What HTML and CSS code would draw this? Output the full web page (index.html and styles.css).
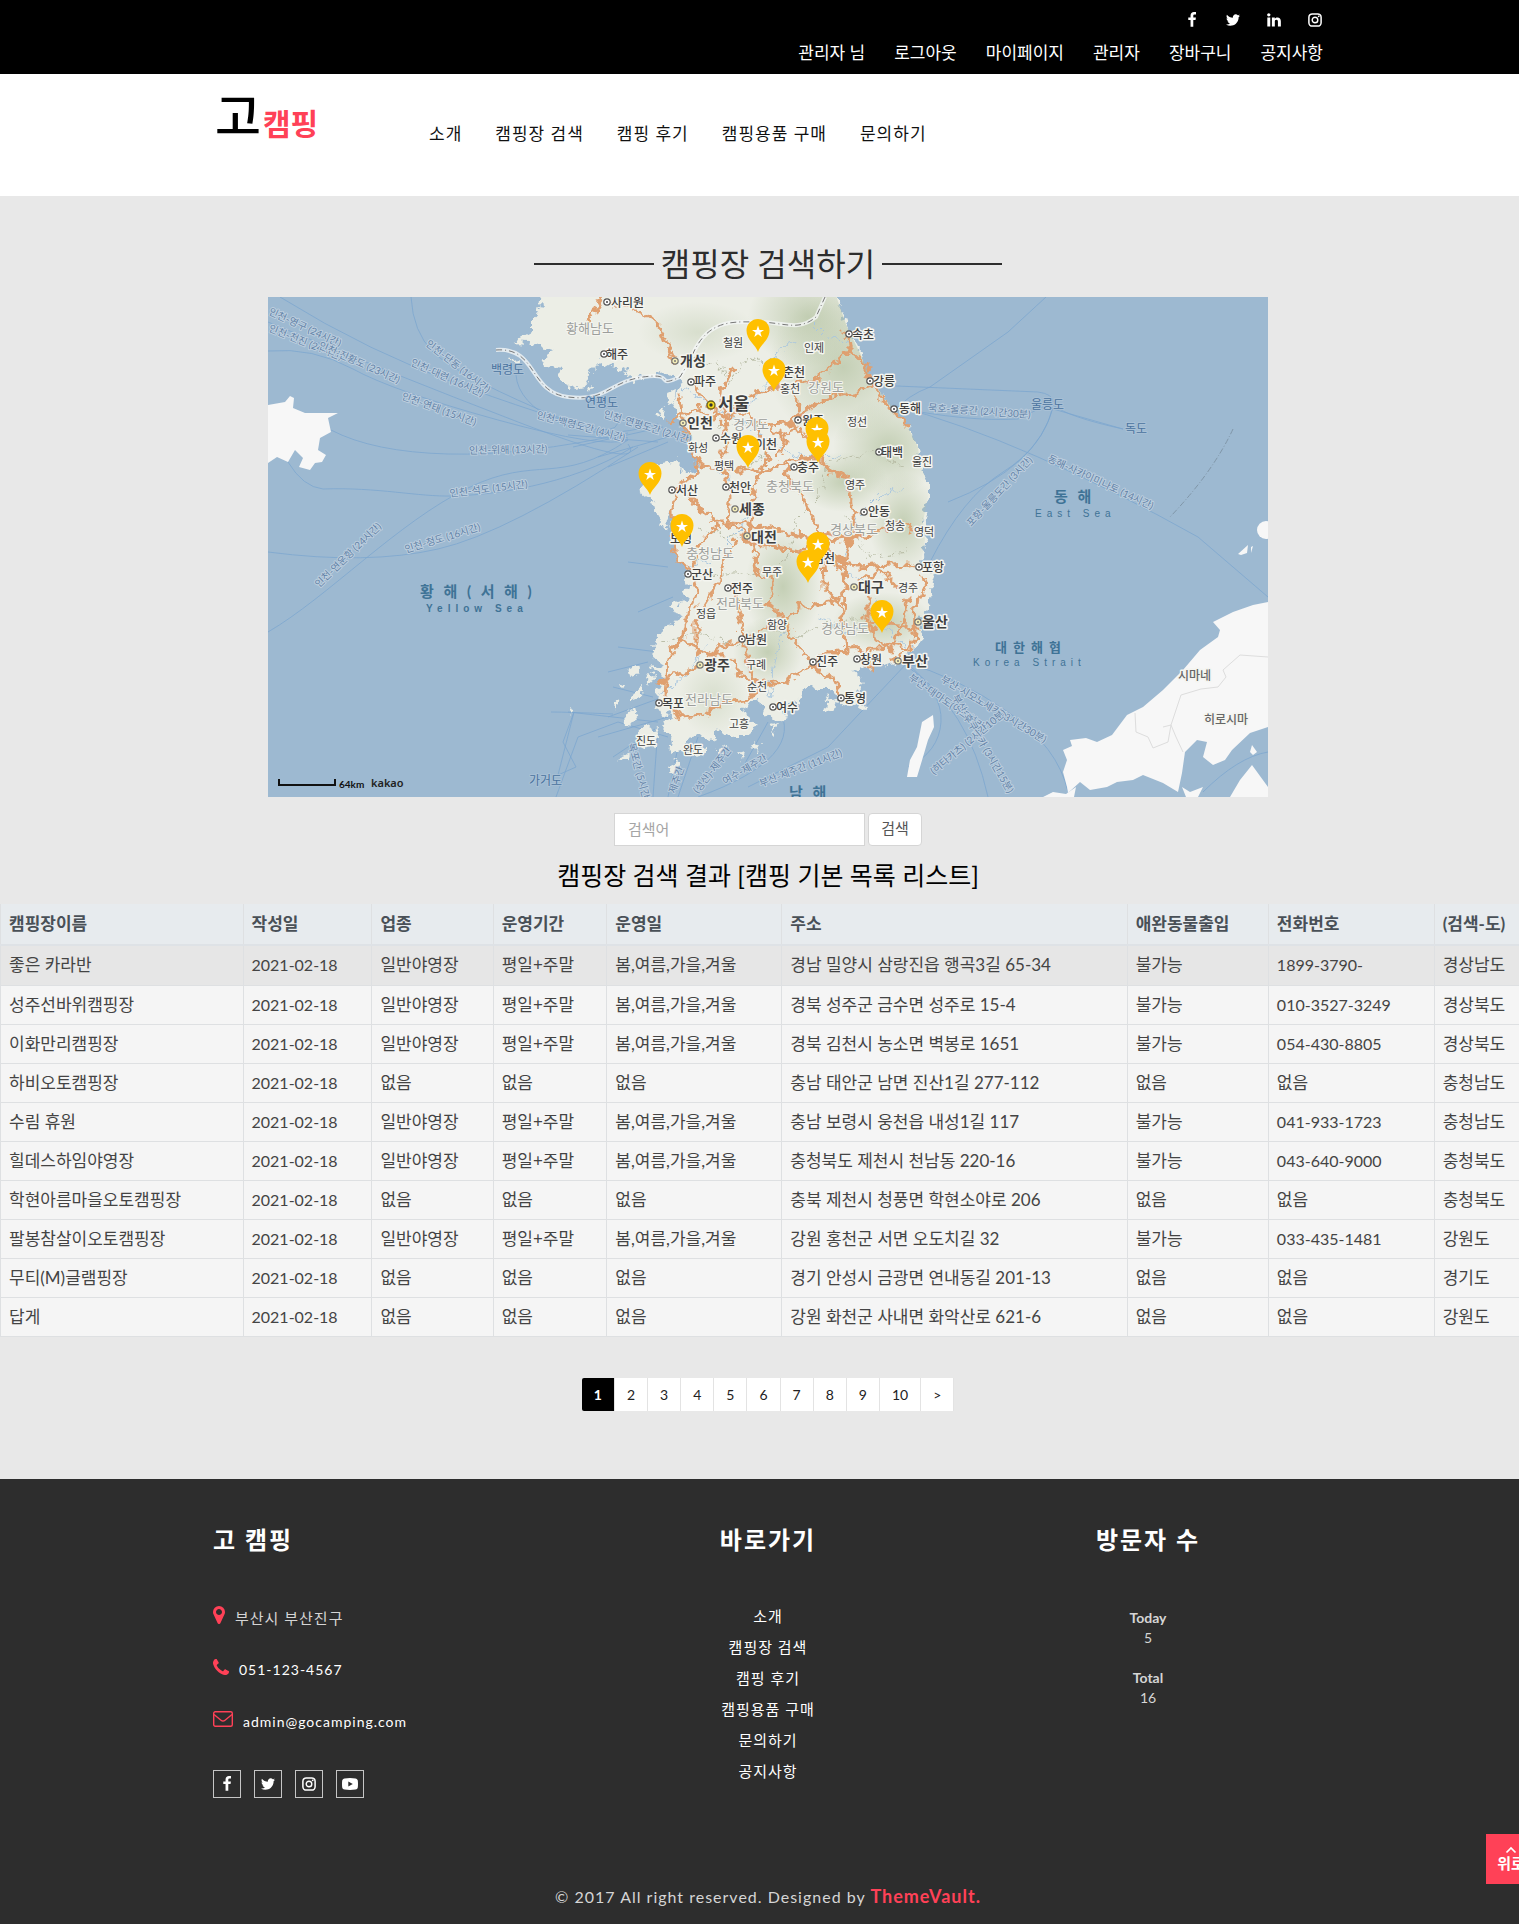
FILE: index.html
```html
<!DOCTYPE html>
<html lang="ko">
<head>
<meta charset="utf-8">
<meta name="viewport" content="width=device-width, initial-scale=1">
<title>고캠핑 - 캠핑장 검색</title>
<link rel="stylesheet" href="styles.css">
</head>
<body>
<svg class="defs" aria-hidden="true">
  <symbol id="i-facebook" viewBox="0 0 1792 1792"><path d="M1343 12v264h-157q-86 0-116 36t-30 108v189h293l-39 296h-254v759h-306v-759h-255v-296h255v-218q0-186 104-288.5t277-102.5q147 0 228 12z"/></symbol>
  <symbol id="i-twitter" viewBox="0 0 1792 1792"><path d="M1684 408q-67 98-162 167 1 14 1 42 0 130-38 259.500t-115.500 248.500-184.500 210.500-258 146-323 54.500q-271 0-496-145 35 4 78 4 225 0 401-138-105-2-188-64.500t-114-159.500q33 5 61 5 43 0 85-11-112-23-185.500-111.500t-73.500-205.500v-4q68 38 146 41-66-44-105-115t-39-154q0-88 44-163 121 149 294.500 238.500t371.500 99.500q-8-38-8-74 0-134 94.500-228.500t228.500-94.500q140 0 236 102 109-21 205-78-37 115-142 178 93-10 186-50z"/></symbol>
  <symbol id="i-linkedin" viewBox="0 0 1792 1792"><path d="M477 625v991h-330v-991h330zm21-306q1 73-50.500 122t-135.500 49h-2q-82 0-132-49t-50-122q0-74 51.500-122.500t134.500-48.500 133 48.500 51 122.500zm1166 729v568h-329v-530q0-105-40.500-164.500t-126.500-59.500q-63 0-105.500 34.500t-63.500 85.500q-11 30-11 81v553h-329q2-399 2-647t-1-296l-1-48h329v144h-2q20-32 41-56t56.500-52 87-43.500 114.500-15.500q171 0 275 113.500t104 332.500z"/></symbol>
  <symbol id="i-instagram" viewBox="0 0 16 16"><rect x="1.900" y="1.900" width="12.200" height="12.200" rx="3.400" fill="none" stroke="currentColor" stroke-width="1.500"/><circle cx="8" cy="8" r="2.800" fill="none" stroke="currentColor" stroke-width="1.400"/><circle cx="11.700" cy="4.300" r=".9"/></symbol>
  <symbol id="i-youtube" viewBox="0 0 16 16"><path fill-rule="evenodd" d="M2.500 2.400Q8 1.700 13.500 2.400 15.500 2.700 15.800 4.600 16.200 8 15.800 11.400 15.500 13.300 13.500 13.600 8 14.300 2.500 13.600.500 13.300.2 11.400-.2 8 .2 4.600.500 2.700 2.500 2.400ZM6.300 5.500V10.500L10.800 8Z"/></symbol>
  <symbol id="i-marker" viewBox="384 128 1024 1536"><path d="M1152 640q0-106-75-181t-181-75-181 75-75 181 75 181 181 75 181-75 75-181zm256 0q0 109-33 179l-364 774q-16 33-47.500 52t-67.500 19-67.500-19-46.500-52l-365-774q-33-70-33-179 0-212 150-362t362-150 362 150 150 362z"/></symbol>
  <symbol id="i-phone" viewBox="192 128 1408 1408"><path d="M1600 1240q0 27-10 70.500t-21 68.500q-21 50-122 106-94 51-186 51-27 0-52.500-3.500t-57.500-12.500-47.500-14.500-55.500-20.500-49-18q-98-35-175-83-128-79-264.500-215.500t-215.500-264.500q-48-77-83-175-3-9-18-49t-20.500-55.500-14.500-47.500-12.500-57.500-3.500-52.500q0-92 51-186 56-101 106-122 25-11 68.500-21t70.500-10q14 0 21 3 18 6 53 76 11 19 30 54t35 63.500 31 53.500q3 4 17.500 25t21.500 35.500 7 28.500q0 20-28.500 50t-62 55-62 53-28.500 46q0 9 5 22.500t8.500 20.500 14 24 11.500 19q76 137 174 235t235 174q2 1 19 11.500t24 14 20.500 8.500 22.500 5q18 0 46-28.500t53-62 55-62 50-28.500q14 0 28.500 7t35.500 21.500 25 17.500q25 15 53.500 31t63.500 35 54 30q70 35 76 53 3 7 3 21z"/></symbol>
  <symbol id="i-mail" viewBox="0 0 20 16"><rect x=".7" y=".7" width="18.600" height="14.600" rx="1.500" fill="none" stroke="currentColor" stroke-width="1.400"/><path d="M1 3.500 8 9.200Q10 10.800 12 9.200L19 3.500" fill="none" stroke="currentColor" stroke-width="1.400"/></symbol>
  <symbol id="i-up" viewBox="0 0 12 8"><path d="M1.500 6.500 6 2l4.500 4.500" fill="none" stroke="currentColor" stroke-width="1.700"/></symbol>
</svg>

<div class="page">
  <div class="topbar">
    <div class="container">
      <div class="top-social">
        <a href="#" aria-label="Facebook"><svg><use href="#i-facebook"/></svg></a>
        <a href="#" aria-label="Twitter"><svg><use href="#i-twitter"/></svg></a>
        <a href="#" aria-label="LinkedIn"><svg><use href="#i-linkedin"/></svg></a>
        <a href="#" aria-label="Instagram"><svg><use href="#i-instagram"/></svg></a>
      </div>
      <nav class="top-links">
        <a href="#">관리자 님</a><a href="#">로그아웃</a><a href="#">마이페이지</a><a href="#">관리자</a><a href="#">장바구니</a><a href="#">공지사항</a>
      </nav>
    </div>
  </div>

  <header class="header">
    <div class="container header-row">
      <a class="logo" href="#"><span class="logo-go">고</span><span class="logo-camp">캠핑</span></a>
      <nav class="main-nav">
        <a href="#">소개</a><a href="#">캠핑장 검색</a><a href="#">캠핑 후기</a><a href="#">캠핑용품 구매</a><a href="#">문의하기</a>
      </nav>
    </div>
  </header>

  <main>
    <h1 class="title">캠핑장 검색하기</h1>
    <div class="map">
      <svg viewBox="0 0 1000 500" role="img" aria-label="캠핑장 지도">
        <defs>
          <radialGradient id="hill"><stop offset="0" stop-color="#b3c2a0" stop-opacity=".7"/><stop offset="1" stop-color="#b3c2a0" stop-opacity="0"/></radialGradient>
          <filter id="coast" x="-5%" y="-5%" width="110%" height="110%" color-interpolation-filters="sRGB"><feTurbulence type="fractalNoise" baseFrequency=".11" numOctaves="3" seed="4" result="n"/><feDisplacementMap in="SourceGraphic" in2="n" scale="14" xChannelSelector="R" yChannelSelector="G"/></filter>
          <clipPath id="land"><use href="#korea-shape"/></clipPath>
          <g id="pin"><path d="M0 0C-2-7-11.500-12-11.500-21.500A11.500 11.500 0 0 1 11.500-21.500C11.500-12 2-7 0 0Z" fill="#ffc000"/><path d="M0-26.500 1.500-22.100H6L2.400-19.400 3.700-15 0-17.700-3.700-15-2.400-19.400-6-22.100H-1.500Z" fill="#fff"/></g>
          <g id="dot"><circle r="3.200" fill="#fff" stroke="#555" stroke-width="1.200"/><circle r="1" fill="#444"/></g>
          <g id="metro"><circle r="3.200" fill="#f6efb8" stroke="#777" stroke-width="1.200"/><circle r="1" fill="#777"/></g>
          <path id="korea-shape" d="M275 -10 272 13 264 23 264 35 246 45 259 46 270 48 289 51 275 61 279 68 289 70 295 71 290 80 296 82 302 93 315 90 322 76 332 66 342 70 352 71 362 76 365 83 382 78 399 75 412 81 416 90 408 97 405 110 409 121 417 133 424 146 429 163 432 173 419 176 409 163 392 166 382 180 372 193 382 201 387 210 392 226 397 233 399 223 404 210 406 226 408 240 405 249 410 263 419 273 414 281 425 288 414 295 422 303 400 311 414 320 395 331 387 346 385 360 395 368 382 371 397 380 390 393 387 410 402 420 395 430 404 443 402 458 415 453 419 443 432 440 444 443 449 433 465 440 482 440 489 428 479 420 475 410 492 401 497 416 505 423 519 420 515 406 529 403 542 386 549 393 565 393 572 406 585 410 590 393 599 385 585 376 602 370 615 371 629 368 637 363 645 353 654 340 652 323 662 310 665 286 667 276 655 273 654 260 657 243 655 225 660 200 660 186 652 166 650 150 640 130 625 110 605 86 592 56 579 30 565 -10Z"/>
        </defs>
        <rect width="1000" height="500" fill="#9db9d1"/>
        <g class="ferry">
          <path d="M12 0Q100 55 200 91T360 141"/><path d="M143 0Q145 35 165 55T270 112 350 120"/><path d="M0 54Q45 50 85 72T230 123 360 143"/><path d="M0 25Q120 75 250 125T360 147"/><path d="M63 133Q105 155 180 157T360 136"/><path d="M20 165Q35 190 55 192C110 190 150 200 185 199S300 190 365 150"/><path d="M0 335C60 300 130 225 200 191S290 190 360 143"/><path d="M0 255Q100 268 170 252T370 150"/><path d="M248 78Q250 105 290 125T390 127"/><path d="M300 138 390 145M305 150 395 130M330 160 400 140M340 170 400 145"/>
          <path d="M625 115Q640 98 662 90L740 35 778 0"/><path d="M605 88 770 95Q785 97 785 105L750 122Q700 125 625 110M785 108Q800 120 855 132M785 112 855 132M785 110Q775 150 735 175T662 265M785 110Q770 170 680 205M625 108Q690 125 770 160T930 240L1000 300"/>
          <path d="M635 365Q690 380 740 415T800 495M640 370Q700 410 720 500M637 365Q675 395 673 425T640 470M640 365 560 450 480 490M510 410Q540 460 430 500M400 440 350 425 310 440 288 500M390 430 385 500M410 450 400 500M430 440 410 500M395 400 340 420M300 415 390 425M283 415Q300 415 345 417M306 415 295 445 308 470 290 478ZM360 265 400 270M370 315 405 300M350 350 390 355M340 375 380 365M345 390 385 400M330 440 400 420M345 460 390 430M1000 455Q970 460 935 495M500 425 475 470"/>
        </g>
        <path class="shore" d="M0 108 17 105 22 99 26 101 25 111 37 116 55 116 70 116 60 121 63 135 52 141 50 153 58 158 54 165 47 166 42 173 31 170 35 161 27 153 20 165 9 160 0 166Z"/>
        <path class="shore" d="M1000 305 985 308 965 315 945 325 952 333 950 340 932 353 915 373 895 393 875 410 859 418 844 438 829 445 818 441 802 443 804 449 795 453 799 463 795 475 799 490 800 496 812 485 822 493 839 490 849 485 865 483 875 478 895 486 910 495 914 476 917 455 929 443 939 445 935 460 945 468 957 463 964 453 982 436 1000 430Z"/>
        <path class="shore" d="M962 500 972 483 984 468 1000 490V500ZM775 500 785 495 798 497 808 490 806 500ZM914 490 922 495 935 490 930 500 918 500ZM984 448 989 455 985 458 982 455ZM665 418 654 425 649 450 642 463 639 480 649 480 655 460 660 443 666 430Z"/>
        <circle class="shore" cx="998" cy="233" r="9"/><path class="shore" d="M970 257 980 248 979 256 973 258ZM983 250 985 249 983 256ZM976 260 980 261"/>
        <path class="border" d="M867 416 868 435 880 440 885 451 900 445 903 428 895 430M903 428 908 440 915 455M903 428 913 398 933 392 950 390 958 380 955 373 972 358 1000 360"/>
        <g filter="url(#coast)">
          <use href="#korea-shape" fill="#eceee6"/>
          <path fill="#eceee6" d="M366 392 376 387 374 400 364 404ZM360 372 368 368 372 378 362 380ZM378 376 386 378 382 386ZM357 418 365 412 368 424 358 428ZM370 435 385 428 392 442 378 452 368 446ZM400 468 410 462 412 474 404 476ZM350 460 360 456 358 464ZM425 452 440 450 438 460ZM448 452 460 448 460 456 450 460ZM500 428 512 426 506 434ZM508 390 524 388 515 404 506 402ZM558 404 568 400 566 414 557 412ZM590 406 598 408 594 416ZM388 118 398 112 396 124ZM398 98 408 94 406 104 400 106ZM320 88 325 87 324 95ZM300 410 306 413 303 418ZM243 62 251 61 247 67ZM345 405 352 402 350 410ZM352 385 358 388 354 393ZM485 450 492 447 490 455ZM470 458 476 456 474 463Z"/>
        </g>
        <g clip-path="url(#land)">
          <ellipse cx="575" cy="70" rx="75" ry="75" fill="url(#hill)"/><ellipse cx="540" cy="20" rx="60" ry="50" fill="url(#hill)"/><ellipse cx="620" cy="150" rx="55" ry="50" fill="url(#hill)"/><ellipse cx="575" cy="185" rx="45" ry="30" fill="url(#hill)"/><ellipse cx="515" cy="290" rx="38" ry="60" fill="url(#hill)"/><ellipse cx="500" cy="355" rx="35" ry="35" fill="url(#hill)"/><ellipse cx="635" cy="225" rx="35" ry="50" fill="url(#hill)"/><ellipse cx="615" cy="325" rx="50" ry="30" fill="url(#hill)"/><ellipse cx="430" cy="35" rx="60" ry="30" fill="url(#hill)" opacity=".5"/><ellipse cx="445" cy="400" rx="35" ry="40" fill="url(#hill)" opacity=".5"/>
        </g>
        <g filter="url(#coast)">
          <path class="river" d="M415 90 440 108 460 118 480 110 500 85 510 55 530 45M460 118 490 135 530 160 570 158M420 270 445 260 470 235 490 200M640 350 615 330 605 290 570 270 590 220 610 200 635 190M390 400 420 375 440 345M500 400 510 350 520 330M425 165 450 175 465 185M545 25 560 40 580 45M550 320 580 335 600 330"/>
          <path class="admin" d="M425 60 455 70 460 90 480 60 510 70M450 130 490 125 495 160 470 175M560 165 600 155 640 170M560 170 550 200 530 220 520 260 500 285M430 230 460 240 500 235M415 275 450 280 490 275M395 345 430 335 470 350 500 345M495 330 530 340 550 330 600 320M580 220 600 260 640 255"/>
        </g>
        <path class="halo" d="M228 53C270 50 260 95 300 100S340 85 375 80 385 92 412 80L418 70M420 70C435 20 465 25 490 25S530 35 548 20L557 0"/><path class="dash" d="M228 53C270 50 260 95 300 100S340 85 375 80 385 92 412 80L418 70M420 70C435 20 465 25 490 25S530 35 548 20L557 0"/>
        <g class="road" filter="url(#coast)">
          <path d="M334 0 321 23"/><path d="M345 6 372 13 393 30 400 50 407 66"/><path d="M425 80 430 95 445 110 455 120 457 150 452 165 458 182 462 200 458 225 475 235 480 245"/>
          <path d="M464 72 455 88 453 105 458 118 445 120 430 112 413 118 402 125"/><path d="M412 98 414 120 422 150 432 165 440 172 460 173 485 173 500 175 512 165 550 162 565 176 580 182 582 205 588 215 584 240 580 250"/>
          <path d="M458 118 470 105 490 95 520 88 550 82 565 68 582 53 581 38 575 35M582 53 598 68 602 85"/>
          <path d="M455 120 480 115 495 128 520 127 545 108 570 98 597 94 602 85 622 110 638 128"/><path d="M522 88 530 105 528 122 515 142 510 160M500 128 520 146"/><path d="M522 127 545 145 558 168 565 178"/>
          <path d="M405 240 404 215 410 190 430 175 428 160M415 190 430 210 450 225 458 225 478 226 500 232 530 238 550 240 560 250 575 275 578 292 575 325 578 355"/>
          <path d="M484 118 500 165 484 190 486 215 480 245"/><path d="M518 165 522 188 538 205 550 235 570 240 590 238"/><path d="M480 226 482 247 500 248 530 255 550 245 580 242 600 238 618 232 634 223 645 233"/>
          <path d="M405 246 410 265 425 275 430 295 418 325 413 345 400 360 398 400"/><path d="M450 228 430 250 425 275M468 245 455 265 450 285 440 305 428 325 428 350 432 358"/><path d="M486 245 490 275 502 280 505 300 500 308 520 325 525 340 545 370 570 385 572 400"/>
          <path d="M413 340 425 350 443 360 450 350 475 343 500 330 516 328 530 310 560 307 577 297"/><path d="M464 288 470 310 474 325 475 345 482 370 490 388M440 358 460 358 468 370 475 382 490 388 515 385 545 370 560 355 580 353 610 352 625 348 643 352"/>
          <path d="M390 385 430 370M402 415 415 420 435 418 450 407 480 402 492 390"/>
          <path d="M555 258 556 290 570 305 576 320M552 250 570 262 590 270 640 267 645 268M590 285 612 272 628 290M600 300 600 325 610 345 625 355M640 300 635 325 625 350M602 325 650 330M655 280 658 295 648 308 645 345"/><path d="M580 292 575 270 580 245 588 240M645 345 625 365M603 372 604 355"/>
        </g>
        <path class="sea-line" d="M965 132Q945 175 902 220"/>

        <g class="route">
          <text transform="translate(0 17) rotate(25)">인천-영구 (24시간)</text><text transform="translate(0 34) rotate(22)">인천-천진 (24시간)</text><text transform="translate(50 51) rotate(24)">인천-진황도 (23시간)</text><text transform="translate(157 48) rotate(38)">인천-단동 (16시간)</text><text transform="translate(142 68) rotate(24)">인천-대련 (16시간)</text><text transform="translate(133 102) rotate(20)">인천-연태 (15시간)</text><text transform="translate(201 157) rotate(-1)">인천-위해 (13시간)</text><text transform="translate(182 200) rotate(-7)">인천-석도 (15시간)</text><text transform="translate(138 256) rotate(-17)">인천-청도 (16시간)</text><text transform="translate(51 291) rotate(-44)">인천-연운항 (24시간)</text><text transform="translate(268 121) rotate(15)">인천-백령도간 (4시간)</text><text transform="translate(335 120) rotate(17)">인천-연평도간 (2시간)</text>
          <text transform="translate(660 114) rotate(4)">묵호-울릉간 (2시간30분)</text><text transform="translate(703 230) rotate(-47)">포항-울릉도간 (3시간)</text><text transform="translate(779 164) rotate(25)">동해-사카이미나토 (14시간)</text><text transform="translate(672 384) rotate(31)">부산-시모노세키 (8시간30분)</text><text transform="translate(640 382) rotate(35)">부산-대마도(이즈하라)</text><text transform="translate(684 400) rotate(60)">부산-후쿠오카 (3시간15분)</text><text transform="translate(666 478) rotate(-40)">(히타카츠) (2시간10분)</text>
          <text transform="translate(360 447) rotate(75)">목포간 (5시간)</text><text transform="translate(407 497) rotate(-70)">제주간</text><text transform="translate(430 497) rotate(-52)">(성산)-제주간</text><text transform="translate(457 488) rotate(-30)">여수-제주간</text><text transform="translate(493 490) rotate(-21)">부산-제주간 (11시간)</text>
        </g>
        <g class="isle"><text x="223" y="77">백령도</text><text x="317" y="110">연평도</text><text x="261" y="488">가거도</text><text x="763" y="112">울릉도</text><text x="857" y="136">독도</text></g>
        <g class="prov"><text x="298" y="36">황해남도</text><text x="465" y="132">경기도</text><text x="540" y="95">강원도</text><text x="498" y="194">충청북도</text><text x="418" y="261">충청남도</text><text x="562" y="237">경상북도</text><text x="448" y="311">전라북도</text><text x="553" y="336">경상남도</text><text x="417" y="407">전라남도</text></g>
        <g class="small"><text x="455" y="50">철원</text><text x="536" y="55">인제</text><text x="512" y="96">홍천</text><text x="579" y="129">정선</text><text x="420" y="155">화성</text><text x="446" y="173">평택</text><text x="577" y="192">영주</text><text x="644" y="169">울진</text><text x="617" y="233">청송</text><text x="646" y="239">영덕</text><text x="494" y="279">무주</text><text x="428" y="321">정읍</text><text x="499" y="332">함양</text><text x="630" y="295">경주</text><text x="478" y="372">구례</text><text x="479" y="394">순천</text><text x="461" y="431">고흥</text><text x="368" y="448">진도</text><text x="415" y="457">완도</text></g>
        <g class="city"><text x="343" y="10">사리원</text><text x="338" y="62">해주</text><text x="426" y="89">파주</text><text x="584" y="42">속초</text><text x="605" y="89">강릉</text><text x="631" y="116">동해</text><text x="515" y="80">춘천</text><text x="534" y="128">원주</text><text x="452" y="146">수원</text><text x="487" y="152">이천</text><text x="529" y="175">충주</text><text x="613" y="160">태백</text><text x="408" y="198">서산</text><text x="461" y="195">천안</text><text x="600" y="219">안동</text><text x="402" y="246">보령</text><text x="423" y="282">군산</text><text x="463" y="296">전주</text><text x="545" y="266">김천</text><text x="654" y="275">포항</text><text x="477" y="347">남원</text><text x="548" y="369">진주</text><text x="592" y="367">창원</text><text x="394" y="411">목포</text><text x="508" y="415">여수</text><text x="576" y="406">통영</text></g>
        <g class="city japan"><text x="910" y="383">시마네</text><text x="936" y="427">히로시마</text></g>
        <g class="big"><text x="412" y="69">개성</text><text x="419" y="131">인천</text><text x="471" y="217">세종</text><text x="483" y="245">대전</text><text x="590" y="295">대구</text><text x="654" y="330">울산</text><text x="436" y="373">광주</text><text x="634" y="369">부산</text></g>
        <text class="capital" x="450" y="113">서울</text>
        <use href="#dot" x="339" y="5"/><use href="#dot" x="336" y="57"/><use href="#dot" x="423" y="85"/><use href="#dot" x="581" y="37"/><use href="#dot" x="602" y="84"/><use href="#dot" x="626" y="112"/><use href="#dot" x="530" y="123"/><use href="#dot" x="448" y="141"/><use href="#dot" x="526" y="170"/><use href="#dot" x="611" y="155"/><use href="#dot" x="404" y="193"/><use href="#dot" x="458" y="190"/><use href="#dot" x="596" y="215"/><use href="#dot" x="420" y="277"/><use href="#dot" x="460" y="291"/><use href="#dot" x="651" y="270"/><use href="#dot" x="474" y="342"/><use href="#dot" x="545" y="365"/><use href="#dot" x="589" y="362"/><use href="#dot" x="391" y="406"/><use href="#dot" x="505" y="410"/><use href="#dot" x="573" y="401"/>
        <use href="#metro" x="407" y="64"/><use href="#metro" x="415" y="126"/><use href="#metro" x="467" y="212"/><use href="#metro" x="479" y="239"/><use href="#metro" x="586" y="290"/><use href="#metro" x="650" y="325"/><use href="#metro" x="432" y="368"/><use href="#metro" x="630" y="364"/>
        <circle cx="443" cy="108" r="4" fill="#f4d91c" stroke="#6b611a" stroke-width="1.300"/><circle cx="443" cy="108" r="1.700" fill="#333"/>
        <g class="sea">
          <text x="152" y="300">황 해 ( 서 해 )</text><text x="786" y="205">동 해</text><text class="strait" x="727" y="355">대한해협</text><text x="521" y="501">남 해</text>
          <g class="en"><text class="en-b" x="158" y="315">Yellow Sea</text><text x="767" y="220">East Sea</text><text x="705" y="369">Korea Strait</text></g>
        </g>
        <use href="#pin" x="490" y="55"/><use href="#pin" x="506" y="94"/><use href="#pin" x="549" y="153"/><use href="#pin" x="550" y="166"/><use href="#pin" x="480" y="171"/><use href="#pin" x="382" y="198"/><use href="#pin" x="414" y="250"/><use href="#pin" x="550" y="268"/><use href="#pin" x="540" y="286"/><use href="#pin" x="614" y="336"/>
        <path d="M11 482V488H67V482" fill="none" stroke="#111" stroke-width="2"/><text class="scale" x="71" y="491">64km</text><text class="kakao" x="103" y="490">kakao</text>
      </svg>
    </div>

    <form class="search" onsubmit="return false">
      <input type="text" placeholder="검색어" aria-label="검색어">
      <button type="submit">검색</button>
    </form>

    <h2 class="result-title">캠핑장 검색 결과 [캠핑 기본 목록 리스트]</h2>

    <table class="camps">
      <colgroup><col class="c-name"><col class="c-date"><col class="c-type"><col class="c-period"><col class="c-season"><col class="c-addr"><col class="c-pet"><col class="c-tel"><col class="c-do"></colgroup>
      <thead><tr><th>캠핑장이름</th><th>작성일</th><th>업종</th><th>운영기간</th><th>운영일</th><th>주소</th><th>애완동물출입</th><th>전화번호</th><th>(검색-도)</th></tr></thead>
      <tbody>
        <tr class="active"><td>좋은 카라반</td><td class="num">2021-02-18</td><td>일반야영장</td><td>평일+주말</td><td>봄,여름,가을,겨울</td><td>경남 밀양시 삼랑진읍 행곡3길 65-34</td><td>불가능</td><td class="num">1899-3790-</td><td>경상남도</td></tr>
        <tr><td>성주선바위캠핑장</td><td class="num">2021-02-18</td><td>일반야영장</td><td>평일+주말</td><td>봄,여름,가을,겨울</td><td>경북 성주군 금수면 성주로 15-4</td><td>불가능</td><td class="num">010-3527-3249</td><td>경상북도</td></tr>
        <tr><td>이화만리캠핑장</td><td class="num">2021-02-18</td><td>일반야영장</td><td>평일+주말</td><td>봄,여름,가을,겨울</td><td>경북 김천시 농소면 벽봉로 1651</td><td>불가능</td><td class="num">054-430-8805</td><td>경상북도</td></tr>
        <tr><td>하비오토캠핑장</td><td class="num">2021-02-18</td><td>없음</td><td>없음</td><td>없음</td><td>충남 태안군 남면 진산1길 277-112</td><td>없음</td><td>없음</td><td>충청남도</td></tr>
        <tr><td>수림 휴원</td><td class="num">2021-02-18</td><td>일반야영장</td><td>평일+주말</td><td>봄,여름,가을,겨울</td><td>충남 보령시 웅천읍 내성1길 117</td><td>불가능</td><td class="num">041-933-1723</td><td>충청남도</td></tr>
        <tr><td>힐데스하임야영장</td><td class="num">2021-02-18</td><td>일반야영장</td><td>평일+주말</td><td>봄,여름,가을,겨울</td><td>충청북도 제천시 천남동 220-16</td><td>불가능</td><td class="num">043-640-9000</td><td>충청북도</td></tr>
        <tr><td>학현아름마을오토캠핑장</td><td class="num">2021-02-18</td><td>없음</td><td>없음</td><td>없음</td><td>충북 제천시 청풍면 학현소야로 206</td><td>없음</td><td>없음</td><td>충청북도</td></tr>
        <tr><td>팔봉참살이오토캠핑장</td><td class="num">2021-02-18</td><td>일반야영장</td><td>평일+주말</td><td>봄,여름,가을,겨울</td><td>강원 홍천군 서면 오도치길 32</td><td>불가능</td><td class="num">033-435-1481</td><td>강원도</td></tr>
        <tr><td>무티(M)글램핑장</td><td class="num">2021-02-18</td><td>없음</td><td>없음</td><td>없음</td><td>경기 안성시 금광면 연내동길 201-13</td><td>없음</td><td>없음</td><td>경기도</td></tr>
        <tr><td>답게</td><td class="num">2021-02-18</td><td>없음</td><td>없음</td><td>없음</td><td>강원 화천군 사내면 화악산로 621-6</td><td>없음</td><td>없음</td><td>강원도</td></tr>
      </tbody>
    </table>

    <nav class="pager" aria-label="페이지">
      <a class="current" href="#">1</a><a href="#">2</a><a href="#">3</a><a href="#">4</a><a href="#">5</a><a href="#">6</a><a href="#">7</a><a href="#">8</a><a href="#">9</a><a href="#">10</a><a href="#">&gt;</a>
    </nav>
  </main>

  <footer class="footer">
    <div class="container footer-cols">
      <section>
        <h3>고 캠핑</h3>
        <ul class="contact">
          <li><svg class="ic-marker"><use href="#i-marker"/></svg><span class="addr">부산시 부산진구</span></li>
          <li><svg class="ic-phone"><use href="#i-phone"/></svg><a href="#">051-123-4567</a></li>
          <li><svg class="ic-mail"><use href="#i-mail"/></svg><a href="#">admin@gocamping.com</a></li>
        </ul>
        <div class="foot-social">
          <a href="#" aria-label="Facebook"><svg><use href="#i-facebook"/></svg></a>
          <a href="#" aria-label="Twitter"><svg><use href="#i-twitter"/></svg></a>
          <a href="#" aria-label="Instagram"><svg><use href="#i-instagram"/></svg></a>
          <a href="#" aria-label="YouTube"><svg><use href="#i-youtube"/></svg></a>
        </div>
      </section>
      <section class="center">
        <h3>바로가기</h3>
        <ul class="quick">
          <li><a href="#">소개</a></li><li><a href="#">캠핑장 검색</a></li><li><a href="#">캠핑 후기</a></li><li><a href="#">캠핑용품 구매</a></li><li><a href="#">문의하기</a></li><li><a href="#">공지사항</a></li>
        </ul>
      </section>
      <section class="center">
        <h3>방문자 수</h3>
        <dl class="visits"><dt>Today</dt><dd>5</dd><dt>Total</dt><dd>16</dd></dl>
      </section>
    </div>
    <p class="copyright">© 2017 All right reserved. Designed by <a href="#">ThemeVault.</a></p>
  </footer>
  <button class="to-top" type="button"><svg><use href="#i-up"/></svg><span>위로</span></button>
</div>
</body>
</html>
```
FILE: styles.css
```css
* { box-sizing: border-box; }

html { overflow-x: hidden; }

body {
  margin: 0;
  overflow-x: hidden;
  background: #e8e8e8;
  color: #444;
  font-family: Lato, "Noto Sans CJK KR", sans-serif;
  font-size: 17px;
  line-height: 24px;
}

a { color: inherit; text-decoration: none; }
svg { fill: currentColor; display: block; }
ul, dl, dd, h1, h2, h3, p { margin: 0; padding: 0; }
ul { list-style: none; }
.defs { position: absolute; width: 0; height: 0; }

/* full-bleed layout runs under the scrollbar gutter */
.page { width: calc(100% + 17px); }

.container {
  max-width: 1140px;
  margin: 0 auto;
  padding: 0 15px;
}

/* top bar */
.topbar {
  height: 74px;
  background: #000;
  color: #fff;
}
.top-social {
  display: flex;
  justify-content: flex-end;
  gap: 25px;
  padding-top: 12px;
}
.top-social svg { width: 16px; height: 16px; }
.top-links {
  display: flex;
  justify-content: flex-end;
  gap: 29px;
  padding-top: 13px;
}

/* header */
.header { background: #fff; height: 122px; }
.header-row { display: flex; align-items: flex-start; }
.logo {
  display: flex;
  align-items: baseline;
  gap: 2px;
  width: 216px;
  padding: 10px 0 0 2px;
  line-height: 64px;
}
.logo-go { color: #000; font-size: 50px; font-weight: 500; }
.logo-camp { color: #ff4157; font-size: 30px; font-weight: 700; }
.main-nav {
  display: flex;
  gap: 33px;
  padding-top: 48px;
  color: #111;
  letter-spacing: 1px;
}

/* search */
.title {
  display: flex;
  justify-content: center;
  align-items: center;
  gap: 7px;
  padding: 44px 0 9px;
  color: #2d2d2d;
  font-size: 32px;
  font-weight: 400;
  line-height: 48px;
}
.title::before, .title::after {
  content: "";
  width: 120px;
  height: 2px;
  background: #2d2d2d;
}
.map { max-width: 1000px; margin: 0 auto; overflow: hidden; }
.map svg { width: 100%; }

.ferry path { fill: none; stroke: #7ba6cf; stroke-width: 1; opacity: .75; }
.shore { fill: #f7f7f7; }
.border { fill: none; stroke: #ddd; }
.river { fill: none; stroke: #a9c6de; stroke-width: 1; }
.halo { fill: none; stroke: #f4f6f6; stroke-width: 4; opacity: .8; }
.dash { fill: none; stroke: #777; stroke-width: 1; stroke-dasharray: 6 3 1 3; }
.admin { fill: none; stroke: #b8bca5; stroke-width: 1; stroke-dasharray: 5 2; }
.road path { fill: none; stroke: #dfa070; stroke-width: 3; stroke-linejoin: round; stroke-linecap: round; }
.sea-line { fill: none; stroke: #8096a8; stroke-dasharray: 6 2 1 2; }
.map text { paint-order: stroke; stroke: #f4f5f0; stroke-width: 3px; stroke-linejoin: round; fill: #3f3f3f; }
.map .route text { font-size: 10px; fill: #6383a8; stroke: #bccede; stroke-width: 2px; }
.map .isle text { font-size: 12px; fill: #49739f; stroke: #a9c1d6; stroke-width: 2px; }
.map .prov text { font-size: 13px; fill: #9c9e9b; stroke-width: 2px; }
.map .small text { font-size: 11px; }
.map .city text { font-size: 12px; font-weight: 500; }
.map .japan text { fill: #666; }
.map .big text { font-size: 14px; font-weight: 700; }
.map .capital { font-size: 17px; font-weight: 700; }
.map .sea text { font-size: 15px; font-weight: 700; fill: #3f7396; stroke: none; letter-spacing: 3px; }
.map .sea .strait { font-size: 13px; letter-spacing: 6px; }
.map .sea .en text { font-family: "Liberation Sans", sans-serif; font-size: 10px; font-weight: 400; letter-spacing: 5px; }
.map .sea .en .en-b { font-weight: 700; }
.map .scale { font-size: 10px; font-weight: 700; stroke: none; fill: #111; }
.map .kakao { font-family: "Noto Sans", sans-serif; font-size: 11px; font-weight: 600; stroke: none; fill: #222; }

.search {
  display: flex;
  justify-content: center;
  gap: 3px;
  padding: 16px 0 12px;
}
.search input, .search button {
  height: 33px;
  border: 1px solid #d5d5d5;
  background: #fff;
  color: #555;
  font: inherit;
  font-size: 15px;
  line-height: 28px;
}
.search input { width: 251px; padding: 0 13px 2px; }
.search input::placeholder { color: #a5a5a5; }
.search button { width: 54px; padding: 0 0 3px; border-radius: 4px; }

.result-title {
  color: #000;
  font-size: 25px;
  font-weight: 400;
  line-height: 34px;
  text-align: center;
  margin-bottom: 12px;
}

/* results */
.camps {
  width: 100%;
  table-layout: fixed;
  border-collapse: collapse;
  background: #f5f5f5;
}
.c-name { width: 15.8%; }
.c-date { width: 8.4%; }
.c-type { width: 7.9%; }
.c-period { width: 7.4%; }
.c-season { width: 11.4%; }
.c-addr { width: 22.5%; }
.c-pet { width: 9.2%; }
.c-tel { width: 10.8%; }
.camps th, .camps td {
  height: 39px;
  padding: 0 8px;
  border: 1px solid #dee0e2;
  text-align: left;
  white-space: nowrap;
}
.camps th {
  height: 41px;
  border-top: 0;
  border-bottom: 2px solid #dee2e6;
  background: #e7ebee;
  color: #495057;
  font-weight: 700;
}
.camps .num { font-size: 16px; }
.camps .active { background: #e6e6e6; }
.camps .active td { height: 40px; }

.pager {
  display: flex;
  justify-content: center;
  padding: 41px 0 68px;
  font-size: 14px;
  line-height: 33px;
}
.pager a {
  padding: 0 12px;
  border-right: 1px solid #e3e3e3;
  background: #fff;
  color: #222;
}
.pager .current {
  border-radius: 2px 0 0 2px;
  background: #000;
  color: #fff;
  font-weight: 700;
}

/* footer */
.footer {
  padding: 46px 0 13px;
  background: #2d2d2d;
  color: #d5d5d5;
}
.footer-cols {
  display: grid;
  grid-template-columns: repeat(3, 1fr);
  gap: 30px;
}
.footer h3 {
  color: #fff;
  font-size: 24px;
  font-weight: 700;
  line-height: 30px;
  letter-spacing: 2px;
}
.center { text-align: center; }
.contact { padding-top: 37px; font-size: 14px; letter-spacing: 1px; }
.contact li { display: flex; align-items: center; gap: 10px; height: 52px; }
.contact a { color: #fff; }
.contact .addr { font-size: 15px; }
.contact svg { color: #ff4157; margin-bottom: 5px; }
.ic-marker { width: 12px; height: 18px; }
.ic-phone { width: 16px; height: 16px; }
.ic-mail { width: 20px; height: 16px; }
.foot-social { display: flex; gap: 13px; padding-top: 22px; }
.foot-social a {
  display: grid;
  place-items: center;
  width: 28px;
  height: 28px;
  border: 1px solid #c5c5c5;
  color: #fff;
}
.foot-social svg { width: 16px; height: 16px; }
.quick { padding-top: 46px; color: #fff; font-size: 15px; line-height: 31px; letter-spacing: 1px; }
.visits { padding-top: 53px; font-size: 14px; line-height: 20px; }
.visits dt { font-weight: 700; }
.visits dd { margin-bottom: 20px; }
.copyright {
  margin-top: 84px;
  font-size: 16px;
  line-height: 28px;
  letter-spacing: 1px;
  text-align: center;
}
.copyright a { color: #ff4157; font-size: 18px; font-weight: 700; }

.to-top {
  position: fixed;
  right: -17px;
  bottom: 40px;
  display: flex;
  flex-direction: column;
  align-items: center;
  justify-content: center;
  width: 50px;
  height: 50px;
  padding: 0;
  border: 0;
  background: #ff4157;
  color: #fff;
  font-family: inherit;
  font-size: 15px;
  font-weight: 700;
  line-height: 18px;
}
.to-top svg { width: 12px; height: 8px; }
```
